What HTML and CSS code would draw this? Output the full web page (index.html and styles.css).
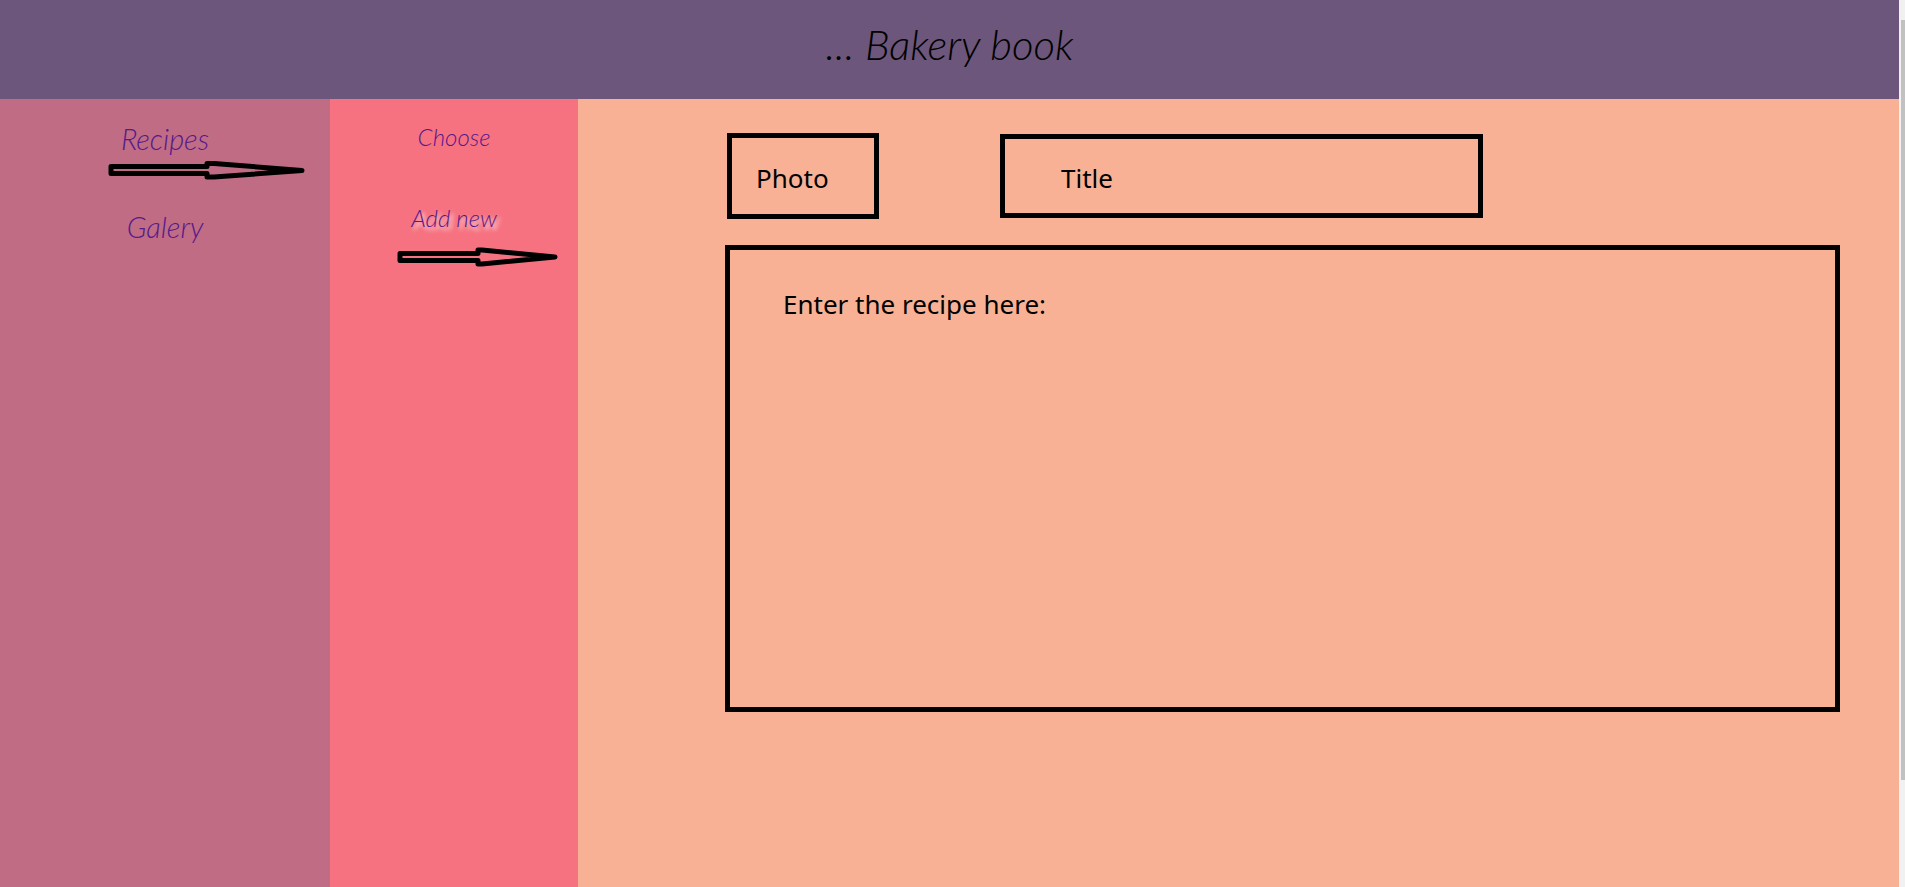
FILE: index.html
```html
<!DOCTYPE html>
<html lang="en">
<head>
<meta charset="utf-8">
<title>Bakery book</title>
<link rel="stylesheet" href="styles.css">
</head>
<body>
<div class="app">
  <header class="header"><h1 class="title">... Bakery book</h1></header>
  <div class="content">
    <nav class="menu" aria-label="Main">
      <a class="link" href="#recipes">Recipes</a>
      <svg class="arrow" width="198" height="20" viewBox="0 0 198 20" aria-hidden="true"><path d="M3 6.500H99V3.500L106 3.500L194 10.500L106 17L99 17V13.500H3Z"/></svg>
      <a class="link" href="#galery">Galery</a>
    </nav>
    <nav class="submenu" aria-label="Recipes">
      <a class="link" href="#choose">Choose</a>
      <a class="link active" href="#add">Add new</a>
      <svg class="arrow" width="162" height="20" viewBox="0 0 162 20" aria-hidden="true"><path d="M3 6.500H81V3L85 3L158 10L85 17L81 17V13.500H3Z"/></svg>
    </nav>
    <main class="main">
      <form class="form">
        <div class="row">
          <button class="box photo" type="button">Photo</button>
          <input class="box name" type="text" placeholder="Title" aria-label="Title">
        </div>
        <textarea class="box recipe" placeholder="Enter the recipe here:" aria-label="Recipe"></textarea>
      </form>
    </main>
  </div>
</div>
<div class="track" aria-hidden="true"><div class="thumb"></div></div>
</body>
</html>
```
FILE: styles.css
```css
* { box-sizing: border-box; }
body {
  margin: 0;
  min-height: 100vh;
  display: grid;
  grid-template-columns: minmax(0, 1fr) 6px;
  font-family: "Noto Sans", sans-serif;
}
.app { display: flex; flex-direction: column; }
.header {
  display: flex;
  justify-content: center;
  padding: 20px 0 31px;
  background: #6c567b;
}
.title, .link {
  font-family: "Bradley Hand ITC", "Bradley Hand", Lato, cursive;
  font-style: italic;
  font-weight: 300;
}
.title { margin: 0; font-size: 42px; line-height: 48px; color: #000; }
.content { flex: 1; display: flex; }
.menu, .submenu { display: flex; flex-direction: column; align-items: center; }
.menu { flex: 0 0 330px; padding-top: 24px; background: #c06c84; }
.submenu { flex: 0 0 248px; padding-top: 22px; background: #f67280; }
.link { color: #551a8b; line-height: 32px; text-decoration: none; }
.menu .link { font-size: 29px; }
.submenu .link { font-size: 24px; }
.arrow { fill: none; stroke: #000; stroke-width: 5; stroke-linejoin: round; }
.menu .arrow { margin: 5px 0 31px 84px; }
.submenu .active { margin-top: 49px; text-shadow: 3px 3px 4px #fff; }
.submenu .arrow { margin: 13px 0 0 48px; }
.main { flex: 1; padding: 34px 59px 0 147px; background: #f8b195; }
.form { display: flex; flex-direction: column; gap: 26px; }
.row { display: flex; align-items: center; gap: 121px; padding-left: 2px; }
.box {
  margin: 0;
  border: 5px solid #000;
  border-radius: 0;
  background: transparent;
  color: #000;
  font-family: inherit;
  font-size: 26px;
  line-height: 36px;
}
.box::placeholder { color: #000; opacity: 1; }
.photo { padding: 4px 24px 0; height: 86px; width: 152px; text-align: left; }
.name { flex: 0 1 483px; min-width: 0; height: 84px; padding: 4px 56px 0; }
.recipe { width: 100%; height: 467px; padding: 36px 53px; resize: none; }
.track { padding: 20px 0 0 2px; background: #f1f1f1; }
.thumb { height: 760px; background: #c1c1c1; }
```
